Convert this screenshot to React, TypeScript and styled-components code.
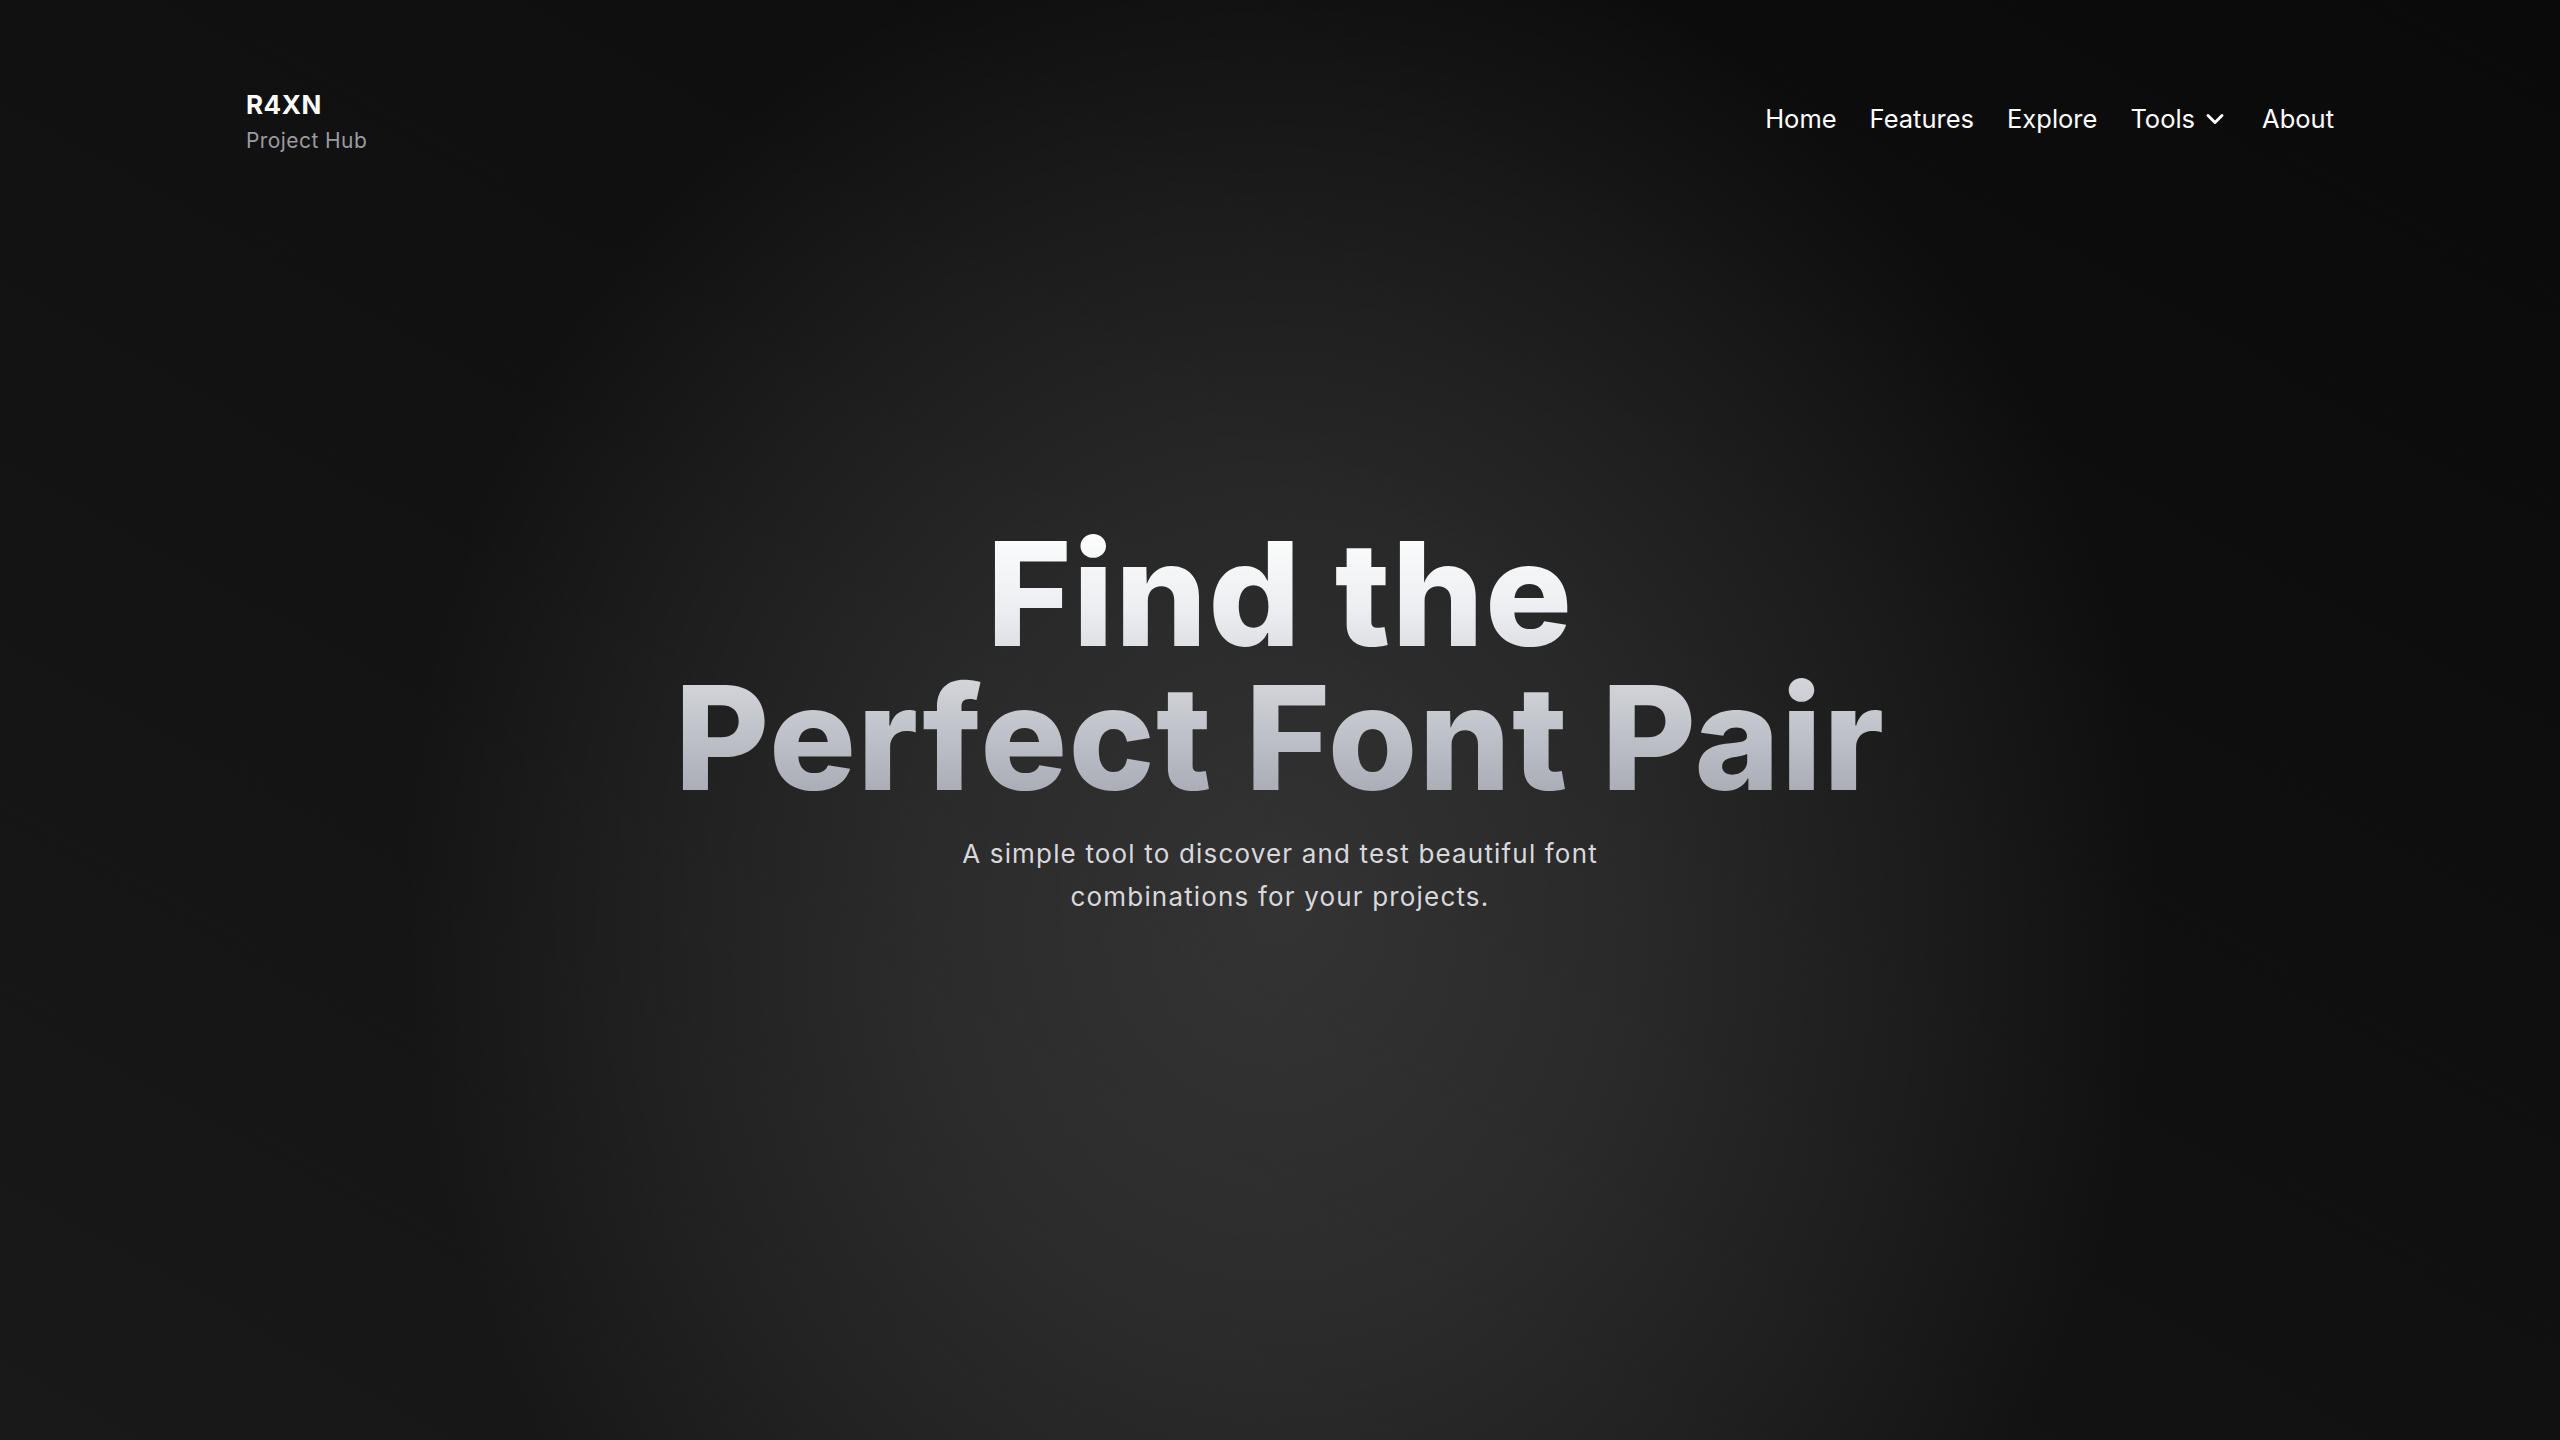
import React from "react";
import styled, { createGlobalStyle } from "styled-components";
import { ChevronDown } from "lucide-react";

const Global = createGlobalStyle`
  * { box-sizing: border-box; }
  html, body { margin: 0; padding: 0; background: #0d0d0d; }
  body { font-family: Inter, "Noto Sans", sans-serif; color: #fff; }
`;

const Page = styled.div`
  min-height: 100vh;
  display: grid;
  grid-template-columns: 1fr;
  grid-template-rows: 1fr;
  background:
    radial-gradient(
      ellipse 880px 1000px at 50% 63%,
      rgba(255, 255, 255, 0.14) 0%,
      rgba(255, 255, 255, 0.1) 40%,
      rgba(255, 255, 255, 0.05) 72%,
      rgba(255, 255, 255, 0) 100%
    ),
    linear-gradient(to top right, #191919 0%, #111111 50%, #0a0a0a 100%);
`;

const Header = styled.header`
  grid-area: 1 / 1;
  align-self: start;
  display: flex;
  justify-content: space-between;
  align-items: center;
  padding: 89px 226px 0 246px;
`;

const Brand = styled.div`
  display: flex;
  flex-direction: column;
  gap: 7px;
`;

const BrandName = styled.div`
  font-size: 26px;
  line-height: 31px;
  font-weight: 700;
  color: #ffffff;
  letter-spacing: 0.02em;
`;

const BrandSub = styled.div`
  font-size: 21px;
  line-height: 28px;
  font-weight: 400;
  color: #9b9ba1;
  letter-spacing: 0.02em;
`;

const Nav = styled.nav`
  display: flex;
  align-items: center;
  gap: 33px;
  margin-bottom: 7px;
`;

const NavLink = styled.a`
  display: flex;
  align-items: center;
  gap: 6px;
  font-size: 25.5px;
  line-height: 37px;
  font-weight: 400;
  color: #ffffff;
  text-decoration: none;
  cursor: pointer;
`;

const Hero = styled.main`
  grid-area: 1 / 1;
  align-self: center;
  display: flex;
  flex-direction: column;
  align-items: center;
  text-align: center;
`;

const Title = styled.h1`
  margin: 0;
  font-size: 145px;
  line-height: 144px;
  font-weight: 800;
  letter-spacing: 0.008em;
  background: linear-gradient(180deg, #ffffff 0%, #eceef1 30%, #a4a7b0 100%);
  -webkit-background-clip: text;
  background-clip: text;
  color: transparent;
`;

const Subtitle = styled.p`
  margin: 23px 0 0;
  max-width: 720px;
  font-size: 26px;
  line-height: 42.5px;
  font-weight: 400;
  letter-spacing: 0.045em;
  color: #d8d8dc;
`;

export default function App() {
  return (
    <>
      <Global />
      <Page>
        <Header>
          <Brand>
            <BrandName>R4XN</BrandName>
            <BrandSub>Project Hub</BrandSub>
          </Brand>
          <Nav>
            <NavLink>Home</NavLink>
            <NavLink>Features</NavLink>
            <NavLink>Explore</NavLink>
            <NavLink>
              Tools
              <ChevronDown size={28} strokeWidth={2.5} />
            </NavLink>
            <NavLink>About</NavLink>
          </Nav>
        </Header>
        <Hero>
          <Title>
            Find the
            <br />
            Perfect Font Pair
          </Title>
          <Subtitle>
            A simple tool to discover and test beautiful font combinations for
            your projects.
          </Subtitle>
        </Hero>
      </Page>
    </>
  );
}
